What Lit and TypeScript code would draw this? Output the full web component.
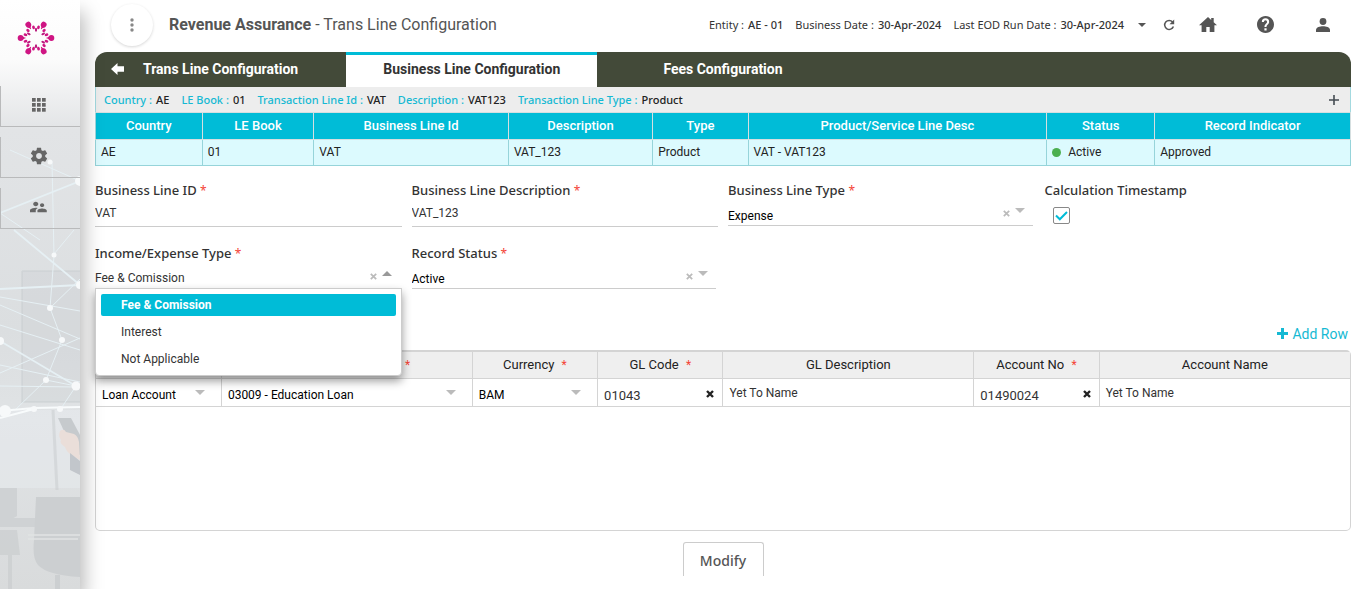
import { LitElement, html, css, svg } from "lit";
import { customElement, property, state } from "lit/decorators.js";
import { classMap } from "lit/directives/class-map.js";

const base = css`
  * { box-sizing: border-box; }
  button, input, select { font: inherit; color: inherit; border: 0; margin: 0; padding: 0; background: none; border-radius: 0; }
  button { cursor: pointer; }
  svg { display: block; flex: none; }
`;

const caret = (up = false) =>
  html`<svg width="10" height="5" viewBox="0 0 10 5" aria-hidden="true"><path d=${up ? "M0 5 5 0l5 5z" : "M0 0h10L5 5z"} fill="currentColor" /></svg>`;
const cross = html`<svg width="7" height="7" viewBox="0 0 7 7" aria-hidden="true"><path d="M.8.8l5.4 5.4M6.2.8.8 6.2" fill="none" stroke="currentColor" stroke-width="1.7" /></svg>`;
const heavyCross = html`<svg width="8" height="8" viewBox="0 0 8 8" aria-hidden="true"><path d="M1 1l6 6M7 1 1 7" fill="none" stroke="currentColor" stroke-width="2.4" /></svg>`;

@customElement("side-nav")
class SideNav extends LitElement {
  static styles = [base, css`
    :host { display: block; position: relative; z-index: 1; width: 80px; flex: none; background: linear-gradient(#fff 0, #fbfbfb 60px, #e2e4e6 130px, #dbdee0 330px, #e0e3e5 420px, #d9dbdc 100%); box-shadow: 4px 12px 18px rgba(0, 0, 0, 0.28); }
    .scene { position: absolute; inset: 0; width: 100%; height: 100%; }
    nav { position: relative; display: flex; flex-direction: column; }
    .logo { width: 38px; margin: 19px 0 19px 17px; }
    .item { height: 41px; margin-top: 10px; padding: 0 4px 2px 0; display: grid; place-items: center; color: #666; border-left: 1px solid #b9babb; border-bottom: 1px solid #b9babb; }
  `];

  logo() {
    const arms = [0, 60, 120, 180, 240, 300];
    return html`<svg class="logo" width="38" height="38" viewBox="-19 -19 38 38" role="img" aria-label="Home">
      ${arms.map((a) => svg`<g transform="rotate(${a})" fill="#cf1583">
        <circle cx="15.400" cy="0" r="2.900" /><path d="M10.500 0 14.500-2.300V2.300zM10.500-.5h4v1h-4z" />
      </g><g transform="rotate(${a + 17})" fill="#cf1583"><ellipse cx="11" cy="0" rx="1.900" ry="1.400" /></g>
      <g transform="rotate(${a - 17})" fill="#cf1583"><ellipse cx="11" cy="0" rx="1.900" ry="1.400" /></g>
      <g transform="rotate(${a + 30})" fill="#b81a7c"><ellipse cx="8.300" cy="0" rx="2" ry="1.100" /></g>`)}
    </svg>`;
  }

  scene() {
    return html`<svg class="scene" viewBox="0 0 80 589" preserveAspectRatio="xMidYMin slice" aria-hidden="true">
      <path d="M22 271h58v131H22z" fill="#c9cdd0" opacity=".3" />
      <path d="M22 271h58M22 271v131h58" fill="none" stroke="#c4c8cb" stroke-width="2" opacity=".35" />
      <path d="M0 410h80v78H0z" fill="#e6eaec" opacity=".6" />
      <path d="M53 410l4 80" stroke="#c8ccce" stroke-width="3" opacity=".5" />
      <g stroke="#e6f0f4" fill="none">
        <path d="M0 213 80 181M14 230 80 285M0 289l80-4M0 341 76 386" stroke-width="1.800" />
        <path d="M0 213 40 240M0 297l80 14M0 305 80 339M0 325 80 350M0 373 80 338M0 365l80 17M52 161 54 256 50 308 62 340 46 380 15 410M50 308l30-29M54 254 74 230M10 150 80 181M0 386l76 1M46 380l30 6-16 24" />
      </g>
      <path d="M0 411 34 408 80 407M0 418 34 409" stroke="#f8fbfc" stroke-width="2" fill="none" />
      <g fill="#f7f9fa"><circle cx="80" cy="181" r="5" /><circle cx="50" cy="162" r="2.500" /><circle cx="54" cy="255" r="2.500" /><circle cx="80" cy="285" r="4" /><circle cx="50" cy="308" r="3" /><circle cx="62" cy="340" r="3" /><circle cx="0" cy="341" r="4" /><circle cx="46" cy="380" r="3" /><circle cx="76" cy="386" r="4.500" /><circle cx="5" cy="411" r="6" /><circle cx="34" cy="409" r="3" /><circle cx="60" cy="409" r="3" /></g>
      <path d="M58 418h13l9 17v20l-6-2z" fill="#c6cacd" />
      <path d="M60 431q4-3 6 1l8 2q4 2 5 8l1 18-7-4q-6-3-8-9-6-4-4-7-3-3-1-9z" fill="#eaded9" />
      <path d="M70 453l10 8v14l-10-5z" fill="#c2c6cb" />
      <path d="M0 488h17v28q-5 4-17 4zM0 518h35v9H0z" fill="#cfd2d4" />
      <path d="M0 530h17l3 25H0zM8 530h4v59H8z" fill="#cacdcf" opacity=".7" />
      <path d="M36 497h44v80q-33-2-42-12-6-7-4-25z" fill="#cccfd1" />
      <path d="M28 535h52M28 539h50" stroke="#e1e3e4" stroke-width="1.500" />
      <path d="M55 575h5v14h-5z" fill="#cccfd1" />
    </svg>`;
  }

  render() {
    return html`${this.scene()}
      <nav aria-label="Main">
        ${this.logo()}
        <button class="item" aria-label="Applications"><svg width="14" height="14" viewBox="0 0 14 14" fill="currentColor">
          ${[0, 5, 10].map((y) => [0, 5, 10].map((x) => svg`<rect x=${x} y=${y} width="3.700" height="3.700" />`))}</svg></button>
        <button class="item" aria-label="Settings"><svg width="20" height="20" viewBox="0 0 24 24" fill="currentColor"><path d="M19.430 12.980c.04-.32.07-.64.07-.98s-.03-.66-.07-.98l2.110-1.650c.19-.15.24-.42.12-.64l-2-3.460c-.12-.22-.39-.3-.61-.22l-2.490 1c-.52-.4-1.080-.73-1.690-.98l-.38-2.650C14.460 2.180 14.250 2 14 2h-4c-.25 0-.46.18-.49.42l-.38 2.650c-.61.25-1.170.59-1.690.98l-2.490-1c-.23-.09-.49 0-.61.22l-2 3.460c-.13.22-.07.49.12.64l2.110 1.650c-.04.32-.07.65-.07.98s.03.66.07.98l-2.110 1.650c-.19.15-.24.42-.12.64l2 3.460c.12.22.39.3.61.22l2.490-1c.52.4 1.080.73 1.690.98l.38 2.650c.03.24.24.42.49.42h4c.25 0 .46-.18.49-.42l.38-2.650c.61-.25 1.170-.59 1.690-.98l2.490 1c.23.09.49 0 .61-.22l2-3.460c.12-.22.07-.49-.12-.64l-2.110-1.650zM12 15.500c-1.930 0-3.500-1.570-3.500-3.500s1.570-3.500 3.500-3.500 3.500 1.570 3.500 3.500-1.570 3.500-3.500 3.500z" /></svg></button>
        <button class="item" aria-label="Users"><svg width="18" height="18" viewBox="0 0 24 24" fill="currentColor"><path d="M16.500 12c1.380 0 2.490-1.120 2.490-2.500S17.880 7 16.500 7C15.120 7 14 8.120 14 9.500s1.120 2.500 2.500 2.500zM9 11c1.660 0 2.990-1.340 2.990-3S10.660 5 9 5C7.340 5 6 6.340 6 8s1.340 3 3 3zm7.500 3c-1.830 0-5.500.92-5.500 2.750V19h11v-2.250c0-1.830-3.670-2.750-5.500-2.750zM9 13c-2.330 0-7 1.170-7 3.500V19h7v-2.250c0-.85.33-2.340 2.370-3.470C10.500 13.100 9.660 13 9 13z" transform="translate(-2.500 0) scale(1.130 1)" /></svg></button>
      </nav>`;
  }
}

@customElement("page-header")
class PageHeader extends LitElement {
  static styles = [base, css`
    :host { display: flex; align-items: center; height: 52px; padding: 0 0 2px 16px; color: #555; }
    .more { width: 42px; height: 42px; border-radius: 50%; background: #fff; box-shadow: 0 1px 3px rgba(0, 0, 0, 0.16); display: grid; place-items: center; color: #888; }
    h1 { margin: 0 auto 0 16px; font: 400 16px/20px Roboto, sans-serif; }
    h1 strong { font-weight: 700; }
    .facts { display: flex; gap: 12px; margin: 0; font: 11px/16px "Noto Sans", sans-serif; color: #333; }
    .facts div { display: flex; gap: 4px; }
    dd { margin: 0; font-weight: 500; }
    .actions { display: flex; align-items: center; color: #555; }
    .actions button { padding-bottom: 1px; }
    .down { margin-left: 14px; }
    .reload { margin-left: 17px; }
    .home { margin-left: 24px; }
    .help { margin-left: 40px; }
    .user { margin: 0 21px 0 42px; }
  `];
  render() {
    return html`
      <button class="more" aria-label="More"><svg width="4" height="14" viewBox="0 0 4 14" fill="currentColor"><circle cx="2" cy="2" r="1.700" /><circle cx="2" cy="7" r="1.700" /><circle cx="2" cy="12" r="1.700" /></svg></button>
      <h1><strong>Revenue Assurance</strong> - Trans Line Configuration</h1>
      <dl class="facts">
        <div><dt>Entity :</dt><dd>AE - 01</dd></div>
        <div><dt>Business Date :</dt><dd>30-Apr-2024</dd></div>
        <div><dt>Last EOD Run Date :</dt><dd>30-Apr-2024</dd></div>
      </dl>
      <div class="actions">
        <button class="down" aria-label="Select date"><svg width="8" height="4" viewBox="0 0 8 4"><path d="M0 0h8L4 4z" fill="currentColor" /></svg></button>
        <button class="reload" aria-label="Refresh"><svg width="12" height="12" viewBox="0 0 12 12"><path d="M9.600 3A4.500 4.500 0 1 0 10.400 7.500" fill="none" stroke="currentColor" stroke-width="1.500" /><path d="M11.200.5v4.700H6.500z" fill="currentColor" /></svg></button>
        <button class="home" aria-label="Home"><svg width="18" height="15" viewBox="0 0 18 15"><path d="M9 0 0 8.300h2.600V15h4.700v-5h3.400v5h4.700V8.300H18l-3.300-3V1h-2.500v2z" fill="currentColor" /></svg></button>
        <button class="help" aria-label="Help"><svg width="17" height="17" viewBox="2 2 20 20"><path d="M12 2C6.480 2 2 6.480 2 12s4.480 10 10 10 10-4.480 10-10S17.520 2 12 2zm1.300 17h-2.600v-2.600h2.600zm2-7.700-.9.900c-.8.800-1.200 1.400-1.200 2.800h-2.400v-.6c0-1.100.5-2.100 1.200-2.800l1.300-1.300c.4-.4.600-.8.600-1.300a1.900 1.900 0 0 0-3.800 0H7.700a4.300 4.300 0 0 1 8.600 0c0 .9-.4 1.700-1 2.300z" fill="currentColor" /></svg></button>
        <button class="user" aria-label="Profile"><svg width="14" height="14" viewBox="0 0 14 14" fill="currentColor"><circle cx="7" cy="3.500" r="3.400" /><path d="M0 14v-2.300C0 9.300 4 8.200 7 8.200s7 1.100 7 3.500V14z" /></svg></button>
      </div>`;
  }
}

const fieldStyles = css`
  .field { display: flex; flex-direction: column; min-width: 0; position: relative; }
  .label { font: 500 13px/20px "Noto Sans", sans-serif; color: #333; white-space: nowrap; }
  .req { color: #f44336; font-weight: 400; font-size: 12px; line-height: 1; }
  .line { display: flex; align-items: center; height: 27px; border-bottom: 1px solid #ccc; font-size: 12px; }
  .line input { flex: 1; min-width: 0; height: 24px; color: #333; outline: 0; }
  .pick { height: 26px; color: #000; margin-right: 2px; }
  .pick select, .pick .current { flex: 1; min-width: 0; height: 18px; appearance: none; text-align: left; outline: 0; align-self: flex-end; }
  .tools { display: flex; gap: 5px; color: #bbb; padding-right: 8px; align-self: center; }
  .tools button { padding-top: 2px; }
  .toggle { align-self: flex-start; }
`;

@customElement("open-select")
class OpenSelect extends LitElement {
  static styles = [base, fieldStyles, css`
    :host { display: block; }
    .pick { margin-right: 0; color: #333; }
    .pick .current { height: 20px; }
    .tools { padding-right: 10px; }
    .toggle { color: #999; }
    .menu { position: absolute; z-index: 3; top: calc(100% - 1px); left: 0; right: 0; margin: 0; padding: 5px; list-style: none; background: #fff; border: 1px solid #ccc; border-radius: 0 0 4px 4px; box-shadow: 0 5px 10px rgba(0, 0, 0, 0.4); font-size: 12px; line-height: 22px; color: #333; display: grid; gap: 5px; }
    .menu li { padding: 0 20px; border-radius: 2px; }
    .menu .chosen { background: #00bcd7; color: #fff; font-weight: 700; }
  `];
  @property() label = "";
  @property({ attribute: false }) options: string[] = [];
  @state() value = "";
  @state() open = true;
  willUpdate() { if (!this.value) this.value = this.options[0]; }
  pick(v: string) { this.value = v; this.open = false; }
  render() {
    return html`<div class="field">
      <span class="label" id="lbl">${this.label} <span class="req">*</span></span>
      <div class="line pick">
        <button class="current" role="combobox" aria-labelledby="lbl" aria-expanded=${this.open} aria-controls="menu" @click=${() => (this.open = !this.open)}>${this.value}</button>
        <span class="tools"><button aria-label="Clear">${cross}</button><span class="toggle">${caret(this.open)}</span></span>
      </div>
      ${this.open ? html`<ul class="menu" id="menu" role="listbox" aria-labelledby="lbl">
        ${this.options.map((o) => html`<li role="option" aria-selected=${o === this.value} class=${classMap({ chosen: o === this.value })} @click=${() => this.pick(o)}>${o}</li>`)}
      </ul>` : ""}
    </div>`;
  }
}

const SUMMARY: [string, string, string][] = [
  ["Country", "AE", "8.5%"], ["LE Book", "01", "8.9%"], ["Business Line Id", "VAT", "15.5%"], ["Description", "VAT_123", "11.5%"],
  ["Type", "Product", "7.6%"], ["Product/Service Line Desc", "VAT - VAT123", "23.8%"], ["Status", "Active", "8.6%"], ["Record Indicator", "Approved", "15.6%"],
];
const CONTEXT = [["Country :", "AE"], ["LE Book :", "01"], ["Transaction Line Id :", "VAT"], ["Description :", "VAT123"], ["Transaction Line Type :", "Product"]];
const GL: { head: string; req?: boolean; value: string; kind: "select" | "code" | "text"; wide?: boolean }[] = [
  { head: "Account Type", req: true, value: "Loan Account", kind: "select" },
  { head: "Product Description", req: true, value: "03009 - Education Loan", kind: "select", wide: true },
  { head: "Currency", req: true, value: "BAM", kind: "select" },
  { head: "GL Code", req: true, value: "01043", kind: "code" },
  { head: "GL Description", value: "Yet To Name", kind: "text", wide: true },
  { head: "Account No", req: true, value: "01490024", kind: "code" },
  { head: "Account Name", value: "Yet To Name", kind: "text", wide: true },
];

@customElement("app-root")
class AppRoot extends LitElement {
  static styles = [base, fieldStyles, css`
    :host { display: flex; min-height: 100vh; background: #fff; font: 12px/16px Roboto, sans-serif; color: #333; }
    main { flex: 1; min-width: 0; padding: 0 15px 13px; display: flex; flex-direction: column; }
    .tabs { display: grid; grid-template-columns: repeat(5, 1fr); height: 35px; background: #434a39; border-radius: 12px 12px 0 0; overflow: hidden; color: #fff; font-size: 14px; font-weight: 700; }
    .tabs button { border-top: 3px solid transparent; padding-bottom: 4px; }
    .tabs .active { background: #fff; color: #333; border-top-color: #00bcd7; }
    .first { display: grid; grid-template-columns: 44px 1fr 44px; align-items: center; }
    .first svg { justify-self: center; }
    .context { display: flex; align-items: center; height: 25px; padding: 1px 11px 0 8px; background: #ededed; border: 1px solid #a3d9df; border-width: 0 1px; font: 11px/16px "Noto Sans", sans-serif; }
    .context dl { display: flex; gap: 12px; margin: 0 auto 0 0; }
    .context dl div { display: flex; gap: 4px; }
    dt { color: #15b9d3; font-weight: 500; }
    dd { margin: 0; color: #222; font-weight: 500; }
    table { border-collapse: collapse; table-layout: fixed; width: 100%; }
    th { font-weight: 500; padding: 0; }
    .summary th { height: 27px; background: #00bcd7; color: #fff; font-size: 13px; border: 1px solid #d5dfe0; }
    .summary th:first-child { border-left-color: #a3d9df; }
    .summary td { height: 26px; background: #dcfafe; border: 1px solid #96d4da; padding: 0 5px 2px; color: #222; }
    .dot { display: inline-block; width: 9px; height: 9px; border-radius: 50%; background: #4caf50; margin-right: 7px; vertical-align: -1px; }
    .form { display: grid; grid-template-columns: repeat(4, 1fr); gap: 16px 10px; padding-top: 14px; align-items: start; }
    .stamp { display: grid; width: 17px; height: 17px; margin: 7px 0 0 8px; }
    .stamp input { appearance: none; width: 17px; height: 17px; border: 1px solid #888; border-radius: 2px; grid-area: 1 / 1; }
    .stamp svg { grid-area: 1 / 1; place-self: center; pointer-events: none; }
    .add { align-self: flex-end; display: flex; align-items: center; gap: 4px; margin: 35px 3px 6px 0; color: #15b9d3; font-size: 14px; line-height: 20px; }
    .add svg { margin-bottom: 1px; }
    .grid { border: 1px solid #d4d4d4; border-top-width: 2px; border-radius: 5px; flex: 1; min-height: 100px; }
    .grid th { height: 26px; background: #efefef; font-weight: 400; font-size: 13px; color: #222; border: 1px solid #d4d4d4; border-top: 0; }
    .grid td { height: 28px; border: 1px solid #d4d4d4; padding: 0 6px; }
    .grid th:first-child, .grid td:first-child { border-left: 0; }
    .grid th:last-child, .grid td:last-child { border-right: 0; }
    .narrow { width: 10%; }
    .wide { width: 20%; }
    .grid .req { margin-left: 4px; }
    .cell { display: flex; align-items: center; height: 27px; padding-top: 6px; color: #000; }
    .cell select, .cell input { flex: 1; min-width: 0; appearance: none; outline: 0; height: 20px; }
    .cell svg { color: #bbb; margin: 0 10px 5px 0; }
    .text { display: block; padding-top: 2px; }
    .code { color: #333; font-size: 13px; }
    .code svg { color: #222; margin: 0 2px 3px 0; }
    .modify { align-self: center; width: 81px; height: 34px; margin-top: 11px; padding-top: 3px; border: 1px solid #ccc; border-bottom: 0; border-radius: 3px 3px 0 0; font: 500 14px/20px "Noto Sans", sans-serif; color: #555; }
  `];

  text(label: string, value: string) {
    return html`<label class="field"><span class="label">${label} <span class="req">*</span></span>
      <span class="line"><input .value=${value} /></span></label>`;
  }
  select(label: string, id: string, value: string) {
    return html`<div class="field"><label class="label" for=${id}>${label} <span class="req">*</span></label>
      <div class="line pick"><select id=${id}><option>${value}</option></select>
      <span class="tools"><button aria-label="Clear">${cross}</button><span class="toggle">${caret()}</span></span></div></div>`;
  }
  cell(c: (typeof GL)[number]) {
    if (c.kind === "select") return html`<span class="cell"><select aria-label=${c.head}><option>${c.value}</option></select>${caret()}</span>`;
    if (c.kind === "code") return html`<span class="cell code"><input aria-label=${c.head} .value=${c.value} /><button aria-label="Clear">${heavyCross}</button></span>`;
    return html`<span class="text">${c.value}</span>`;
  }
  render() {
    return html`<side-nav></side-nav>
      <main>
        <page-header></page-header>
        <div class="tabs" role="tablist">
          <button role="tab" class="first"><svg width="13" height="12" viewBox="0 0 13 12"><path d="M0 6 6.500 0v3.300H13v5.400H6.500V12z" fill="#fff" /></svg><span>Trans Line Configuration</span></button>
          <button role="tab" class="active" aria-selected="true">Business Line Configuration</button>
          <button role="tab">Fees Configuration</button>
        </div>
        <div class="context">
          <dl>${CONTEXT.map(([k, v]) => html`<div><dt>${k}</dt><dd>${v}</dd></div>`)}</dl>
          <button aria-label="Expand"><svg width="10" height="10" viewBox="0 0 10 10"><path d="M5 0v10M0 5h10" stroke="#444b52" stroke-width="1.600" /></svg></button>
        </div>
        <table class="summary">
          <colgroup>${SUMMARY.map(([, , w]) => html`<col style="width:${w}" />`)}</colgroup>
          <thead><tr>${SUMMARY.map(([h]) => html`<th scope="col">${h}</th>`)}</tr></thead>
          <tbody><tr>${SUMMARY.map(([h, v]) => html`<td>${h === "Status" ? html`<span class="dot"></span>` : ""}${v}</td>`)}</tr></tbody>
        </table>
        <div class="form">
          ${this.text("Business Line ID", "VAT")}
          ${this.text("Business Line Description", "VAT_123")}
          ${this.select("Business Line Type", "type", "Expense")}
          <div class="field"><label class="label" for="stamp">Calculation Timestamp</label>
            <span class="stamp"><input type="checkbox" id="stamp" checked /><svg width="13" height="10" viewBox="0 0 13 10"><path d="M1 4.500 4.800 8.300 12 1" fill="none" stroke="#00bcd7" stroke-width="2" /></svg></span></div>
          <open-select label="Income/Expense Type" .options=${["Fee & Comission", "Interest", "Not Applicable"]}></open-select>
          ${this.select("Record Status", "status", "Active")}
        </div>
        <button class="add"><svg width="11" height="11" viewBox="0 0 11 11"><path d="M5.500 0v11M0 5.500h11" stroke="currentColor" stroke-width="3" /></svg>Add Row</button>
        <div class="grid"><table>
          <colgroup>${GL.map((c) => html`<col class=${c.wide ? "wide" : "narrow"} />`)}</colgroup>
          <thead><tr>${GL.map((c) => html`<th scope="col">${c.head}${c.req ? html` <span class="req">*</span>` : ""}</th>`)}</tr></thead>
          <tbody><tr>${GL.map((c) => html`<td>${this.cell(c)}</td>`)}</tr></tbody>
        </table></div>
        <button class="modify">Modify</button>
      </main>`;
  }
}
